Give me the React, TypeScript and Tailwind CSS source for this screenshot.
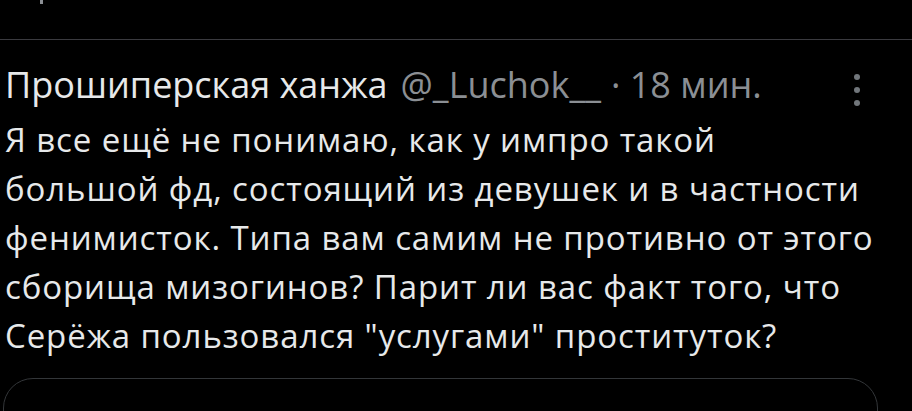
export default function App() {
  return (
    <div className="w-[912px] h-[411px] overflow-hidden bg-black text-[#e7e9ea]" style={{ fontFamily: '"Open Sans", "Noto Sans", sans-serif' }}>
      <div className="h-[40px] border-b border-[#3a3a3f] pl-[40px]">
        <div className="w-[3px] h-[4px] bg-[#8b8f94]" />
      </div>
      <article className="pl-[5px] pr-[34px] pt-[25px]">
        <div className="flex items-start justify-between">
          <div className="flex items-baseline text-[36px] leading-[40px] whitespace-nowrap">
            <span className="text-[#e7e9ea]">Прошиперская ханжа</span>
            <span className="ml-[13px] text-[#8b8f94]">@_Luchok__</span>
            <span className="ml-[10px] text-[#8b8f94]">· 18 мин.</span>
          </div>
          <div className="flex flex-col items-center gap-[7px] pt-[9px] mr-[18px]">
            <span className="w-[6px] h-[6px] rounded-full bg-[#71767b]" />
            <span className="w-[6px] h-[6px] rounded-full bg-[#71767b]" />
            <span className="w-[6px] h-[6px] rounded-full bg-[#71767b]" />
          </div>
        </div>
        <p className="mt-[9px] text-[33px] leading-[49px] tracking-[0.9px]">
          Я все ещё не понимаю, как у импро такой
          <br />
          большой фд, состоящий из девушек и в частности
          <br />
          фенимисток. Типа вам самим не противно от этого
          <br />
          сборища мизогинов? Парит ли вас факт того, что
          <br />
          Серёжа пользовался "услугами" проституток?
        </p>
        <div className="mt-[18px] ml-[-2px] h-[80px] rounded-[30px] border border-[#333639]" />
      </article>
    </div>
  );
}
